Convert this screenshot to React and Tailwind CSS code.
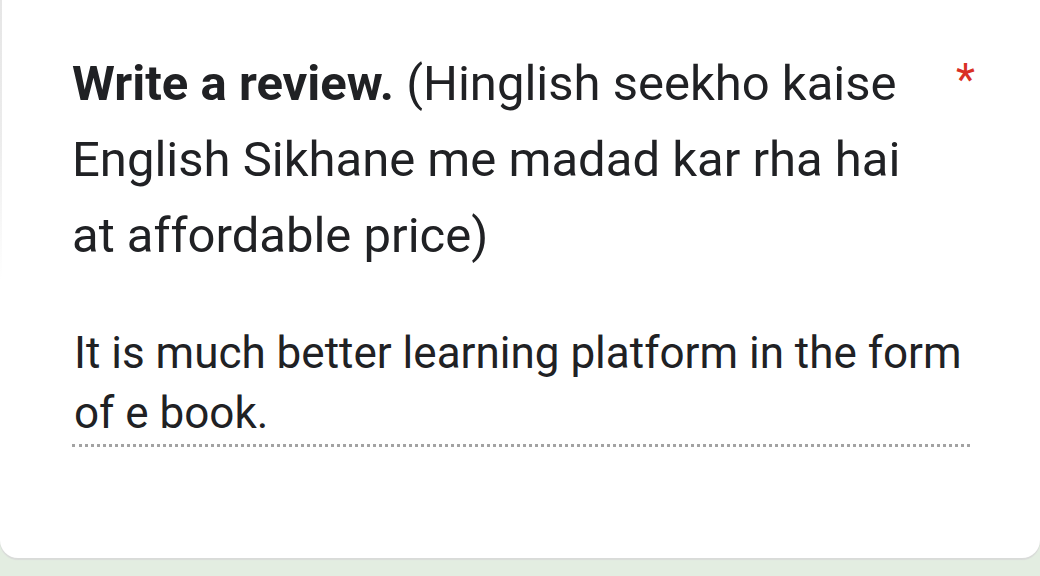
export default function App() {
  return (
    <div className="min-h-screen w-[1040px] h-[576px] bg-[#e3ede1] overflow-hidden font-['Roboto',sans-serif]">
      <div className="relative h-[558px] bg-white rounded-b-[18px] shadow-[0_2px_1px_#d9dbd9] flex">
        <div className="w-[2px] h-[280px] bg-gradient-to-b from-[#e6e6e6] via-[#ececec] to-transparent" />
        <div className="flex-1 pl-[70px] pt-[46px]">
          <div className="flex items-start">
            <div className="w-[870px] text-[49px] leading-[76px] text-[#202124] whitespace-nowrap">
              <span className="font-bold">Write a review.</span> (Hinglish seekho kaise
              <br />
              English Sikhane me madad kar rha hai
              <br />
              at affordable price)
            </div>
            <span className="ml-[14px] mt-[4px] text-[44px] leading-[60px] text-[#d93025]">*</span>
          </div>
          <div className="mt-[49px] w-[898px]">
            <div className="text-[44px] leading-[60px] text-[#202124] pl-[2px] whitespace-nowrap">
              It is much better learning platform in the form
              <br />
              of e book.
            </div>
            <div className="mt-[1px] border-b-[3px] border-dotted border-[#a3a3a3]" />
          </div>
        </div>
      </div>
    </div>
  );
}
